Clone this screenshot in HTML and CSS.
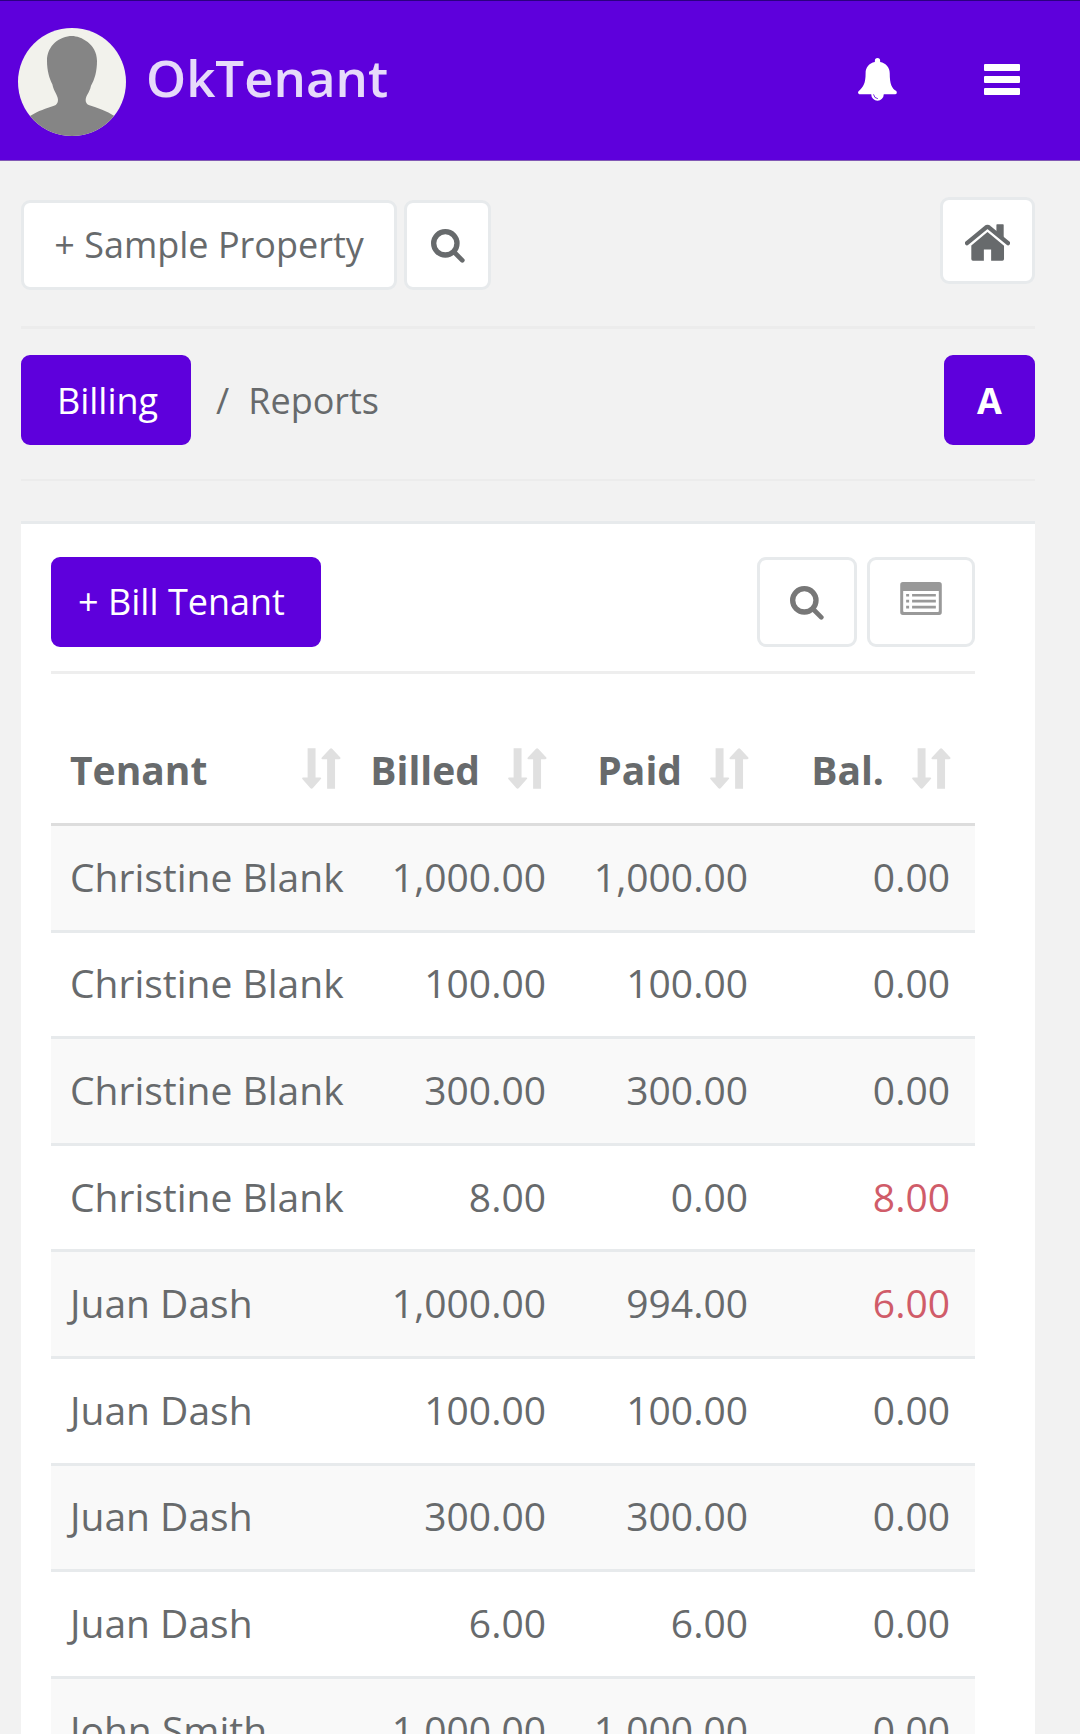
FILE: index.html
```html
<!DOCTYPE html>
<html lang="en">
<head>
<meta charset="UTF-8" />
<meta name="viewport" content="width=device-width, initial-scale=1.0" />
<title>OkTenant</title>
<link rel="stylesheet" href="styles.css">
</head>
<body>
<svg class="sprite" width="0" height="0">
<symbol id="icon-search" viewBox="0 0 102 102">
<circle cx="43" cy="43" r="35" fill="none" stroke="currentColor" stroke-width="16" />
<path d="M69 69L94 94" stroke="currentColor" stroke-width="14" stroke-linecap="round" />
</symbol>
<symbol id="icon-sort" viewBox="0 0 118 124">
<path d="M17 1h24v88h14q5 1 2 5L33 121q-4 4-8 0L1 94q-2-4 2-5h14zM76 123h24V34h13q5-1 3-5L92 3q-4-4-8 0L60 29q-3 4 2 5h14z" fill="currentColor" />
</symbol>
</svg>

<header class="topbar">
<svg class="avatar" viewBox="0 0 324 324">
<clipPath id="face"><circle cx="162" cy="162" r="162" /></clipPath>
<g clip-path="url(#face)">
<rect width="324" height="324" fill="#f2f2ec" />
<path d="M162 24C188 24 237 48 237 98C237 130 230 154 219 173C214 196 203 202 203 217Q203 227 212 231C240 240 266 249 289 264L324 324H0L36 264C62 247 84 242 108 233Q120 229 120 215C119 201 107 190 103 169C94 151 87 128 87 98C87 52 126 24 162 24z" fill="#858585" />
</g>
</svg>
<span class="brand">OkTenant</span>
<svg class="bell" viewBox="0 0 118 130">
<path d="M51 12V8a8 8 0 0 1 16 0v4C85 16 96 28 96 46C96 80 102 91 116 100Q120 108 113 110H78a19 19 0 0 1-38 0H4Q-2 107 1 101C17 87 23 76 23 46C23 28 33 16 51 12z" fill="#fff" />
<path d="M47 110q2 12 13 13" fill="none" stroke="#5e00dc" stroke-width="2.5" />
</svg>
<svg class="menu" viewBox="0 0 36 31">
<path d="M1 0h34q1 0 1 1v5q0 1-1 1H1q-1 0-1-1V1q0-1 1-1zM1 12h34q1 0 1 1v5q0 1-1 1H1q-1 0-1-1v-5q0-1 1-1zM1 24h34q1 0 1 1v5q0 1-1 1H1q-1 0-1-1v-5q0-1 1-1z" fill="#fff" />
</svg>
</header>

<main class="page">
<div class="toolbar">
<a class="btn property">+ Sample Property</a>
<a class="btn search"><svg class="icon-search"><use href="#icon-search" /></svg></a>
<a class="btn home">
<svg class="icon-home" viewBox="0 0 136 112">
<path d="M6 58L63 11Q68 6 73 11L130 58" fill="none" stroke="currentColor" stroke-width="13" stroke-linecap="round" />
<path d="M95 3q0-2 2-2h18q2 0 2 2v42L95 27z" fill="currentColor" />
<path d="M68 24L118 66v40q0 5-5 5H79V77H57v34H24q-5 0-5-5V65z" fill="currentColor" />
</svg>
</a>
</div>

<div class="crumbs">
<a class="btn primary billing">Billing</a>
<span class="slash">/</span>
<span class="current">Reports</span>
<a class="btn primary letter">A</a>
</div>

<section class="card">
<div class="actions">
<a class="btn primary bill">+ Bill Tenant</a>
<a class="btn find"><svg class="icon-search"><use href="#icon-search" /></svg></a>
<a class="btn list">
<svg class="icon-list" viewBox="0 0 126 100">
<path fill-rule="evenodd" d="M8 0h110q8 0 8 8v84q0 8-8 8H8q-8 0-8-8V8Q0 0 8 0zM9 27v61q0 3 3 3h102q3 0 3-3V27z" fill="currentColor" />
<path d="M18 36h9v8h-9zM36 36h72v8H36zM18 54h9v8h-9zM36 54h72v8H36zM18 72h9v8h-9zM36 72h72v8H36z" fill="currentColor" />
</svg>
</a>
</div>

<table class="report">
<colgroup>
<col class="col-tenant"><col class="col-billed"><col class="col-paid"><col class="col-bal">
</colgroup>
<thead>
<tr>
<th><div class="head">Tenant <svg class="sort"><use href="#icon-sort" /></svg></div></th>
<th><div class="head">Billed <svg class="sort"><use href="#icon-sort" /></svg></div></th>
<th><div class="head">Paid <svg class="sort"><use href="#icon-sort" /></svg></div></th>
<th><div class="head">Bal. <svg class="sort"><use href="#icon-sort" /></svg></div></th>
</tr>
</thead>
<tbody>
<tr><td>Christine Blank</td><td>1,000.00</td><td>1,000.00</td><td>0.00</td></tr>
<tr><td>Christine Blank</td><td>100.00</td><td>100.00</td><td>0.00</td></tr>
<tr><td>Christine Blank</td><td>300.00</td><td>300.00</td><td>0.00</td></tr>
<tr><td>Christine Blank</td><td>8.00</td><td>0.00</td><td class="due">8.00</td></tr>
<tr><td>Juan Dash</td><td>1,000.00</td><td>994.00</td><td class="due">6.00</td></tr>
<tr><td>Juan Dash</td><td>100.00</td><td>100.00</td><td>0.00</td></tr>
<tr><td>Juan Dash</td><td>300.00</td><td>300.00</td><td>0.00</td></tr>
<tr><td>Juan Dash</td><td>6.00</td><td>6.00</td><td>0.00</td></tr>
<tr><td>John Smith</td><td>1,000.00</td><td>1,000.00</td><td>0.00</td></tr>
</tbody>
</table>
</section>
</main>
</body>
</html>
```
FILE: styles.css
```css
* {
box-sizing: border-box;
}
body {
margin: 0;
height: 1734px;
overflow: hidden;
background-color: #f2f2f2;
color: #676a6c;
font-family: "Open Sans", sans-serif;
font-size: 36px;
}
svg {
display: block;
flex: none;
}
.sprite {
position: absolute;
}

/* top bar */
.topbar {
display: flex;
align-items: flex-start;
height: 161px;
padding: 0 60px 0 18px;
background-color: #5e00dc;
border-top: 1px solid #2c0080;
border-bottom: 1px solid #8259b5;
}
.avatar {
width: 108px;
height: 108px;
margin-top: 27px;
}
.brand {
margin: 41px auto 0 20px;
color: #e6dafa;
font-size: 51px;
font-weight: 600;
line-height: 70px;
}
.bell {
width: 39px;
height: 43px;
margin: 57px 87px 0 0;
}
.menu {
width: 36px;
height: 31px;
margin-top: 63px;
}

/* buttons */
.page {
padding: 0 45px 0 21px;
}
.btn {
display: flex;
align-items: center;
justify-content: center;
height: 90px;
background-color: #fff;
border: 3px solid #e7eaec;
border-radius: 9px;
white-space: nowrap;
}
.primary {
background-color: #5e00dc;
border-color: #5e00dc;
color: #fff;
}
.icon-search {
width: 34px;
height: 34px;
margin-top: 2px;
}
.toolbar {
display: flex;
align-items: flex-start;
height: 168px;
padding-top: 39px;
border-bottom: 3px solid #ececec;
}
.property {
width: 376px;
padding-bottom: 2px;
}
.search {
width: 87px;
margin-left: 7px;
}
.home {
width: 95px;
height: 87px;
margin: -3px 0 0 auto;
}
.icon-home {
width: 45px;
height: 37px;
margin-top: 3px;
}
.crumbs {
display: flex;
align-items: center;
height: 152px;
padding-bottom: 8px;
border-bottom: 2px solid #ececec;
}
.billing {
width: 170px;
padding-left: 3px;
}
.slash {
margin-left: 25px;
}
.current {
margin-left: 19px;
}
.letter {
width: 91px;
margin-left: auto;
font-weight: 700;
}

/* report card */
.card {
margin-top: 40px;
padding: 33px 60px 0 30px;
background-color: #fff;
border-top: 3px solid #e7eaec;
}
.actions {
display: flex;
height: 117px;
border-bottom: 3px solid #eee;
}
.bill {
width: 270px;
padding: 0 9px 2px 0;
}
.find {
width: 100px;
margin-left: auto;
color: #777;
}
.list {
width: 108px;
margin-left: 10px;
color: #999;
}
.icon-list {
width: 42px;
height: 33px;
margin-bottom: 8px;
}
.report {
width: 924px;
table-layout: fixed;
border-collapse: separate;
border-spacing: 0;
font-size: 39px;
line-height: 56px;
}
.col-tenant {
width: 314px;
}
.col-billed {
width: 206px;
}
.col-paid,
.col-bal {
width: 202px;
}
.report th {
height: 152px;
padding: 43px 24px 0 0;
border-bottom: 3px solid #ddd;
}
.report td {
height: 106.6px;
padding: 0 25px 2px 0;
border-bottom: 3px solid #e7eaec;
text-align: right;
white-space: nowrap;
}
.report th:first-child,
.report td:first-child {
padding-left: 19px;
text-align: left;
}
.report tbody tr:nth-child(odd) {
background-color: #f9f9f9;
}
.head {
display: flex;
align-items: center;
justify-content: flex-end;
}
th:first-child .head {
justify-content: space-between;
}
.sort {
width: 39px;
height: 41px;
margin: 0 0 4px 28px;
color: #e0e0e0;
}
.report .due {
color: #d05c69;
}
```
